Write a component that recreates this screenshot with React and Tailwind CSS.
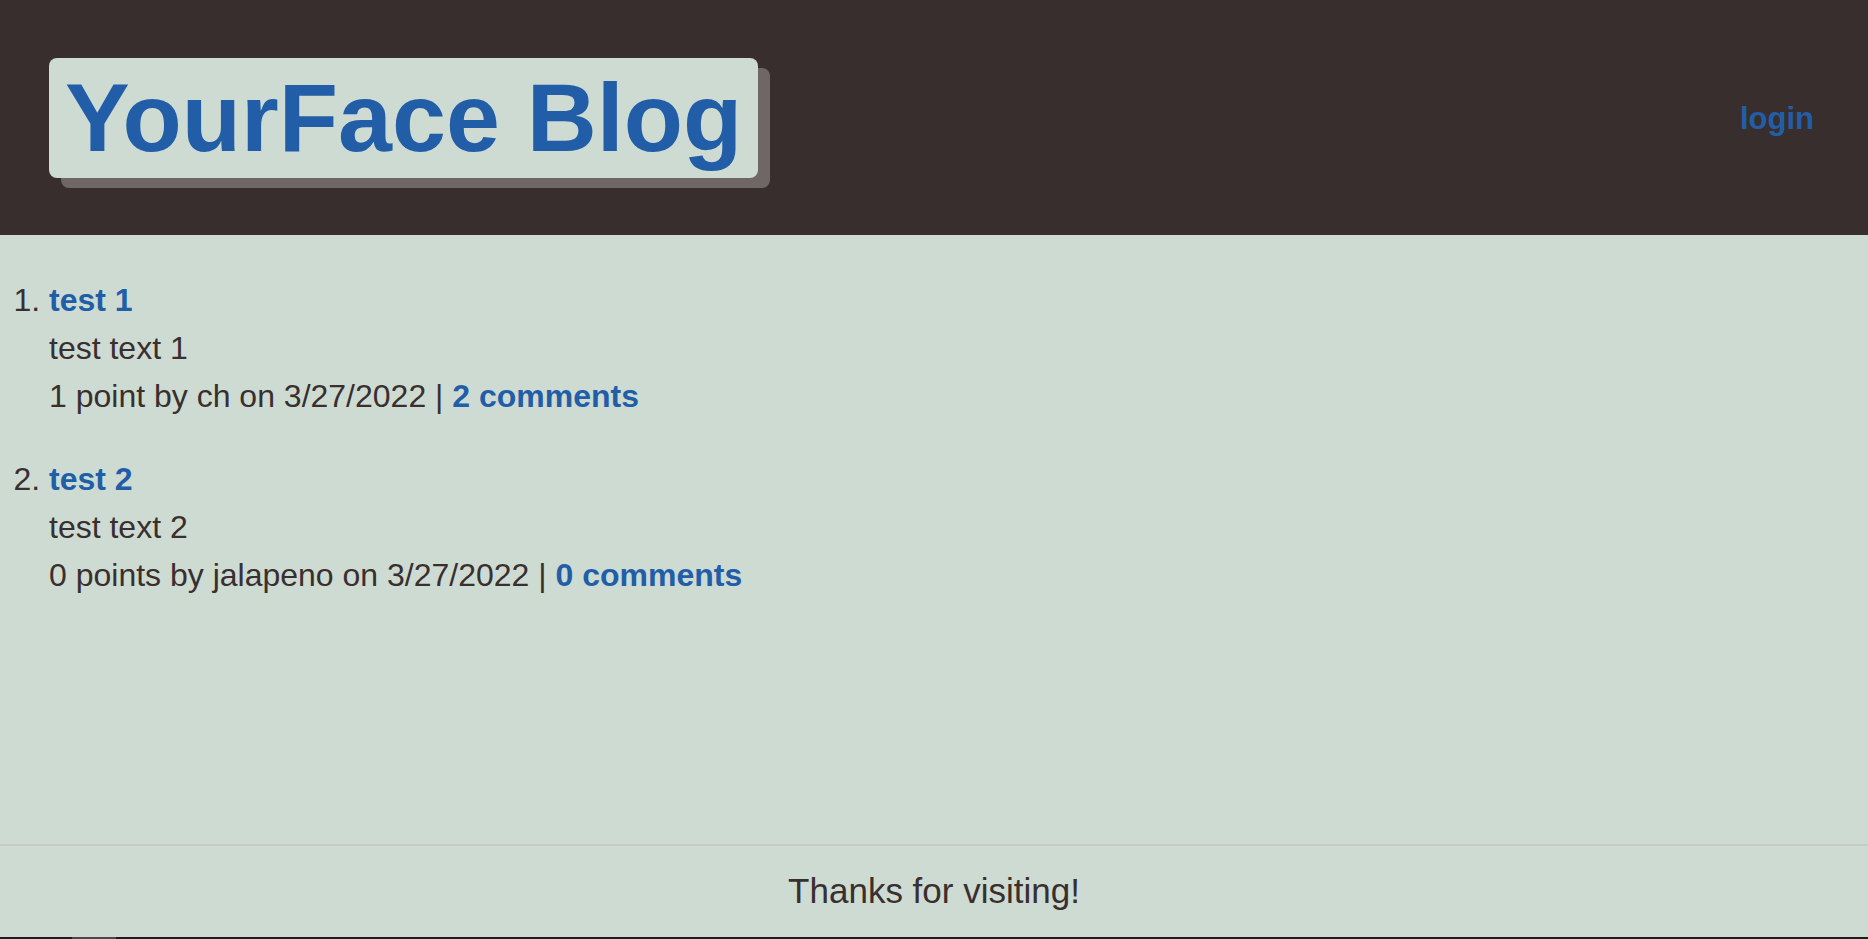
import React from 'react';

const posts = [
  { id: 1, title: 'test 1', text: 'test text 1', points: '1 point', author: 'ch', date: '3/27/2022', comments: '2 comments' },
  { id: 2, title: 'test 2', text: 'test text 2', points: '0 points', author: 'jalapeno', date: '3/27/2022', comments: '0 comments' },
];

const App = () => {
  return (
    <div className="min-h-screen flex flex-col bg-[#cddbd2] text-[#3a2f2f] font-['Liberation_Sans',Arial,sans-serif]">
      <header className="h-[235px] bg-[#392e2e] flex items-center justify-between pl-[49px] pr-[54px]">
        <h1 className="mt-[1px] bg-[#cddbd2] rounded-lg px-4 py-[4px] shadow-[12px_10px_0_#6f6665] text-[97px] leading-[1.15] font-bold text-[#225ea8]">
          YourFace Blog
        </h1>
        <a href="#" className="pt-[4px] text-[31px] font-bold text-[#225ea8]">login</a>
      </header>

      <main className="flex-1">
        <ol className="list-decimal pl-[49px] pt-[41px] text-[32px] leading-[48px]">
          {posts.map((post) => (
            <li key={post.id} className="mb-[35px]">
              <a href="#" className="font-bold text-[#225ea8]">{post.title}</a>
              <div>{post.text}</div>
              <div>
                {post.points} by {post.author} on {post.date} |{' '}
                <a href="#" className="font-bold text-[#225ea8]">{post.comments}</a>
              </div>
            </li>
          ))}
        </ol>
      </main>

      <footer className="border-t-2 border-[#c9cbc9] h-[93px] flex items-center justify-center text-[35px]">
        Thanks for visiting!
      </footer>
      <div className="h-[2px] bg-[#1d1d1b] flex">
        <div className="ml-[72px] w-[44px] bg-[#4a4a48]" />
      </div>
    </div>
  );
};

export default App;
